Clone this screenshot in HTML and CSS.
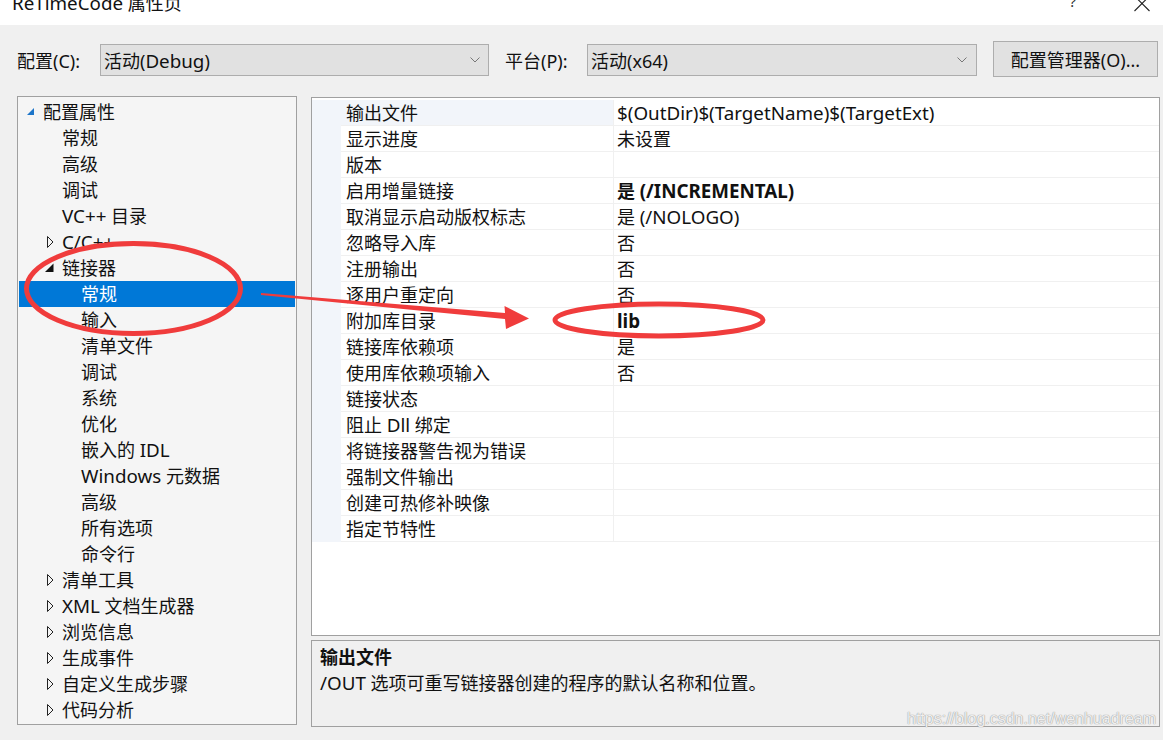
FILE: index.html
```html
<!DOCTYPE html>
<html lang="zh-CN">
<head>
<meta charset="utf-8">
<title>ReTimeCode 属性页</title>
<link rel="stylesheet" href="styles.css">
</head>
<body>
<div class="window">
  <div class="titlebar">
    <span class="title"><span class="en">ReTimeCode</span> 属性页</span>
    <span class="tb-btns">
      <span class="help">?</span>
      <svg class="close" width="16" height="12" viewBox="0 0 16 12"><path d="M0.5 -4 L15.5 11 M15.5 -4 L0.5 11" stroke="#222" stroke-width="1.1" fill="none"/></svg>
    </span>
  </div>

  <div class="toolbar">
    <span class="lbl lbl-cfg">配置(C):</span>
    <div class="combo combo-cfg">
      <span class="combo-text">活动(<span class="en">Debug</span>)</span>
      <svg class="chev" width="10" height="6" viewBox="0 0 10 6"><path d="M0.5 0.5 L5 5 L9.5 0.5" stroke="#777" stroke-width="1" fill="none"/></svg>
    </div>
    <span class="lbl lbl-plat">平台(P):</span>
    <div class="combo combo-plat">
      <span class="combo-text">活动(x64)</span>
      <svg class="chev" width="10" height="6" viewBox="0 0 10 6"><path d="M0.5 0.5 L5 5 L9.5 0.5" stroke="#777" stroke-width="1" fill="none"/></svg>
    </div>
    <button class="btn">配置管理器(O)...</button>
  </div>

  <div class="main">
    <div class="tree">
      <div class="node l0"><span class="tog"><svg width="8" height="8" viewBox="0 0 8 8"><path d="M7 0 L7 7 L0 7 Z" fill="#1c75c9"/></svg></span><span>配置属性</span></div>
      <div class="node l1"><span class="tog"></span><span>常规</span></div>
      <div class="node l1"><span class="tog"></span><span>高级</span></div>
      <div class="node l1"><span class="tog"></span><span>调试</span></div>
      <div class="node l1"><span class="tog"></span><span><span class="en">VC++</span> 目录</span></div>
      <div class="node l1"><span class="tog"><svg width="10" height="12" viewBox="0 0 10 12"><path d="M2.5 0.5 L8 6 L2.5 11.5 Z" fill="none" stroke="#222" stroke-width="1"/></svg></span><span class="en">C/C++</span></div>
      <div class="node l1"><span class="tog"><svg width="10" height="10" viewBox="0 0 10 10"><path d="M8.5 0.5 L8.5 9 L0 9 Z" fill="#111"/></svg></span><span>链接器</span></div>
      <div class="node l2 sel"><span>常规</span></div>
      <div class="node l2"><span>输入</span></div>
      <div class="node l2"><span>清单文件</span></div>
      <div class="node l2"><span>调试</span></div>
      <div class="node l2"><span>系统</span></div>
      <div class="node l2"><span>优化</span></div>
      <div class="node l2"><span>嵌入的 <span class="en">IDL</span></span></div>
      <div class="node l2"><span><span class="en">Windows</span> 元数据</span></div>
      <div class="node l2"><span>高级</span></div>
      <div class="node l2"><span>所有选项</span></div>
      <div class="node l2"><span>命令行</span></div>
      <div class="node l1"><span class="tog"><svg width="10" height="12" viewBox="0 0 10 12"><path d="M2.5 0.5 L8 6 L2.5 11.5 Z" fill="none" stroke="#222" stroke-width="1"/></svg></span><span>清单工具</span></div>
      <div class="node l1"><span class="tog"><svg width="10" height="12" viewBox="0 0 10 12"><path d="M2.5 0.5 L8 6 L2.5 11.5 Z" fill="none" stroke="#222" stroke-width="1"/></svg></span><span><span class="en">XML</span> 文档生成器</span></div>
      <div class="node l1"><span class="tog"><svg width="10" height="12" viewBox="0 0 10 12"><path d="M2.5 0.5 L8 6 L2.5 11.5 Z" fill="none" stroke="#222" stroke-width="1"/></svg></span><span>浏览信息</span></div>
      <div class="node l1"><span class="tog"><svg width="10" height="12" viewBox="0 0 10 12"><path d="M2.5 0.5 L8 6 L2.5 11.5 Z" fill="none" stroke="#222" stroke-width="1"/></svg></span><span>生成事件</span></div>
      <div class="node l1"><span class="tog"><svg width="10" height="12" viewBox="0 0 10 12"><path d="M2.5 0.5 L8 6 L2.5 11.5 Z" fill="none" stroke="#222" stroke-width="1"/></svg></span><span>自定义生成步骤</span></div>
      <div class="node l1"><span class="tog"><svg width="10" height="12" viewBox="0 0 10 12"><path d="M2.5 0.5 L8 6 L2.5 11.5 Z" fill="none" stroke="#222" stroke-width="1"/></svg></span><span>代码分析</span></div>
    </div>

    <div class="right">
      <div class="grid">
        <div class="prow cur"><span class="pm"></span><span class="pn">输出文件</span><span class="pv en">$(OutDir)$(TargetName)$(TargetExt)</span></div>
        <div class="prow"><span class="pm"></span><span class="pn">显示进度</span><span class="pv">未设置</span></div>
        <div class="prow"><span class="pm"></span><span class="pn">版本</span><span class="pv"></span></div>
        <div class="prow"><span class="pm"></span><span class="pn">启用增量链接</span><span class="pv b">是 <span class="en">(/INCREMENTAL)</span></span></div>
        <div class="prow"><span class="pm"></span><span class="pn">取消显示启动版权标志</span><span class="pv">是 <span class="en">(/NOLOGO)</span></span></div>
        <div class="prow"><span class="pm"></span><span class="pn">忽略导入库</span><span class="pv">否</span></div>
        <div class="prow"><span class="pm"></span><span class="pn">注册输出</span><span class="pv">否</span></div>
        <div class="prow"><span class="pm"></span><span class="pn">逐用户重定向</span><span class="pv">否</span></div>
        <div class="prow"><span class="pm"></span><span class="pn">附加库目录</span><span class="pv b en">lib</span></div>
        <div class="prow"><span class="pm"></span><span class="pn">链接库依赖项</span><span class="pv">是</span></div>
        <div class="prow"><span class="pm"></span><span class="pn">使用库依赖项输入</span><span class="pv">否</span></div>
        <div class="prow"><span class="pm"></span><span class="pn">链接状态</span><span class="pv"></span></div>
        <div class="prow"><span class="pm"></span><span class="pn">阻止 <span class="en">Dll</span> 绑定</span><span class="pv"></span></div>
        <div class="prow"><span class="pm"></span><span class="pn">将链接器警告视为错误</span><span class="pv"></span></div>
        <div class="prow"><span class="pm"></span><span class="pn">强制文件输出</span><span class="pv"></span></div>
        <div class="prow"><span class="pm"></span><span class="pn">创建可热修补映像</span><span class="pv"></span></div>
        <div class="prow"><span class="pm"></span><span class="pn">指定节特性</span><span class="pv"></span></div>
      </div>
      <div class="desc">
        <div class="desc-title">输出文件</div>
        <div class="desc-text"><span class="en">/OUT</span> 选项可重写链接器创建的程序的默认名称和位置。</div>
      </div>
    </div>
  </div>

  <svg class="annot" width="1163" height="740" viewBox="0 0 1163 740">
    <ellipse cx="133.5" cy="288.5" rx="107" ry="45" fill="none" stroke="#f03c3c" stroke-width="5"/>
    <polygon points="261,293 505,313 504.5,306 529,318.5 506,329 505,319 261,295" fill="#f03c3c"/>
    <ellipse cx="659" cy="320" rx="104" ry="16" fill="none" stroke="#f03c3c" stroke-width="5"/>
  </svg>

  <div class="watermark">https://blog.csdn.net/wenhuadream</div>
</div>
</body>
</html>
```

FILE: styles.css
```css
* { box-sizing: border-box; }
html, body { margin: 0; padding: 0; }
body {
  width: 1163px;
  height: 740px;
  overflow: hidden;
  background: #f0f0f0;
  font-family: "Noto Sans", "Noto Sans CJK SC", sans-serif;
  font-size: 18px;
  color: #111;
}
.window { position: relative; width: 1163px; height: 740px; }
.en { font-size: 18.8px; }

/* title bar */
.titlebar {
  height: 25px;
  background: #fff;
  display: flex;
  overflow: hidden;
  padding-left: 12px;
}
.title { margin-top: -6px; line-height: 18px; height: 18px; white-space: nowrap; }
.tb-btns { margin-left: auto; display: flex; align-items: flex-start; padding-right: 13px; }
.help { font-size: 15px; line-height: 15px; margin-top: -6px; margin-right: 58px; color: #333; }
.close { display: block; }

/* toolbar */
.toolbar {
  height: 71px;
  display: flex;
  align-items: flex-end;
  padding: 16px 0 19px 17px;
}
.lbl { line-height: 32px; height: 32px; white-space: nowrap; }
.lbl-cfg { width: 83px; }
.lbl-plat { width: 82px; margin-left: 16px; }
.combo {
  height: 32px;
  border: 1px solid #adadad;
  background: #e1e1e1;
  display: flex;
  align-items: center;
  padding-left: 3px;
  margin-bottom: 1px;
}
.combo-cfg { width: 389px; }
.combo-plat { width: 390px; }
.combo-text { white-space: nowrap; }
.chev { margin-left: auto; margin-right: 8px; display: block; }
.combo-plat .chev { margin-right: 9px; }
.btn {
  margin-left: 16px;
  width: 165px;
  height: 36px;
  border: 1px solid #adadad;
  background: #e1e1e1;
  font: inherit;
  color: inherit;
  padding: 0;
  white-space: nowrap;
}

/* main */
.main {
  display: flex;
  align-items: flex-start;
  gap: 14px;
  padding: 0 3px 0 17px;
}
.tree {
  width: 280px;
  height: 629px;
  border: 1px solid #a0a0a0;
  background: #f5f5f5;
  padding: 2px 1px 0;
  overflow: hidden;
}
.node {
  height: 26px;
  line-height: 26px;
  display: flex;
  align-items: center;
  white-space: nowrap;
}
.tog { display: flex; align-items: center; }
.tog svg { display: block; }
.l0 { padding-left: 8px; }
.l0 .tog { width: 16px; }
.l1 { padding-left: 26px; }
.l1 .tog { width: 17px; }
.l2 { padding-left: 62px; }
.sel { background: #0078d7; color: #fff; }

.right {
  flex: 1;
  margin-top: 1px;
  display: flex;
  flex-direction: column;
  gap: 4px;
}
.grid {
  height: 539px;
  border: 1px solid #a0a0a0;
  background: #fff;
  padding-top: 2px;
}
.prow { display: flex; height: 26px; }
.pm { width: 29px; background: #f2f5fa; }
.pn {
  width: 272px;
  padding: 1px 0 0 5px;
  line-height: 24px;
  border-bottom: 1px solid #f0f0f0;
  white-space: nowrap;
}
.pv {
  flex: 1;
  padding: 1px 0 0 3px;
  line-height: 24px;
  border-left: 1px solid #f0f0f0;
  border-bottom: 1px solid #f0f0f0;
  white-space: nowrap;
}
.cur .pn { background: #f2f5fa; }
.b { font-weight: bold; }

.desc {
  height: 87px;
  border: 1px solid #a0a0a0;
  background: #f0f0f0;
  padding: 3px 8px;
}
.desc-title { font-weight: bold; line-height: 26px; }
.desc-text { line-height: 26px; }

/* overlays */
.annot { position: absolute; left: 0; top: 0; pointer-events: none; }
.watermark {
  position: absolute;
  left: 907px;
  top: 710px;
  font-family: "Liberation Sans", sans-serif;
  font-size: 16px;
  line-height: 18px;
  color: rgba(255, 255, 255, 0.85);
  text-shadow: 0 0 1px #9a9a9a, 0 0 1px #9a9a9a;
  white-space: nowrap;
}
```
